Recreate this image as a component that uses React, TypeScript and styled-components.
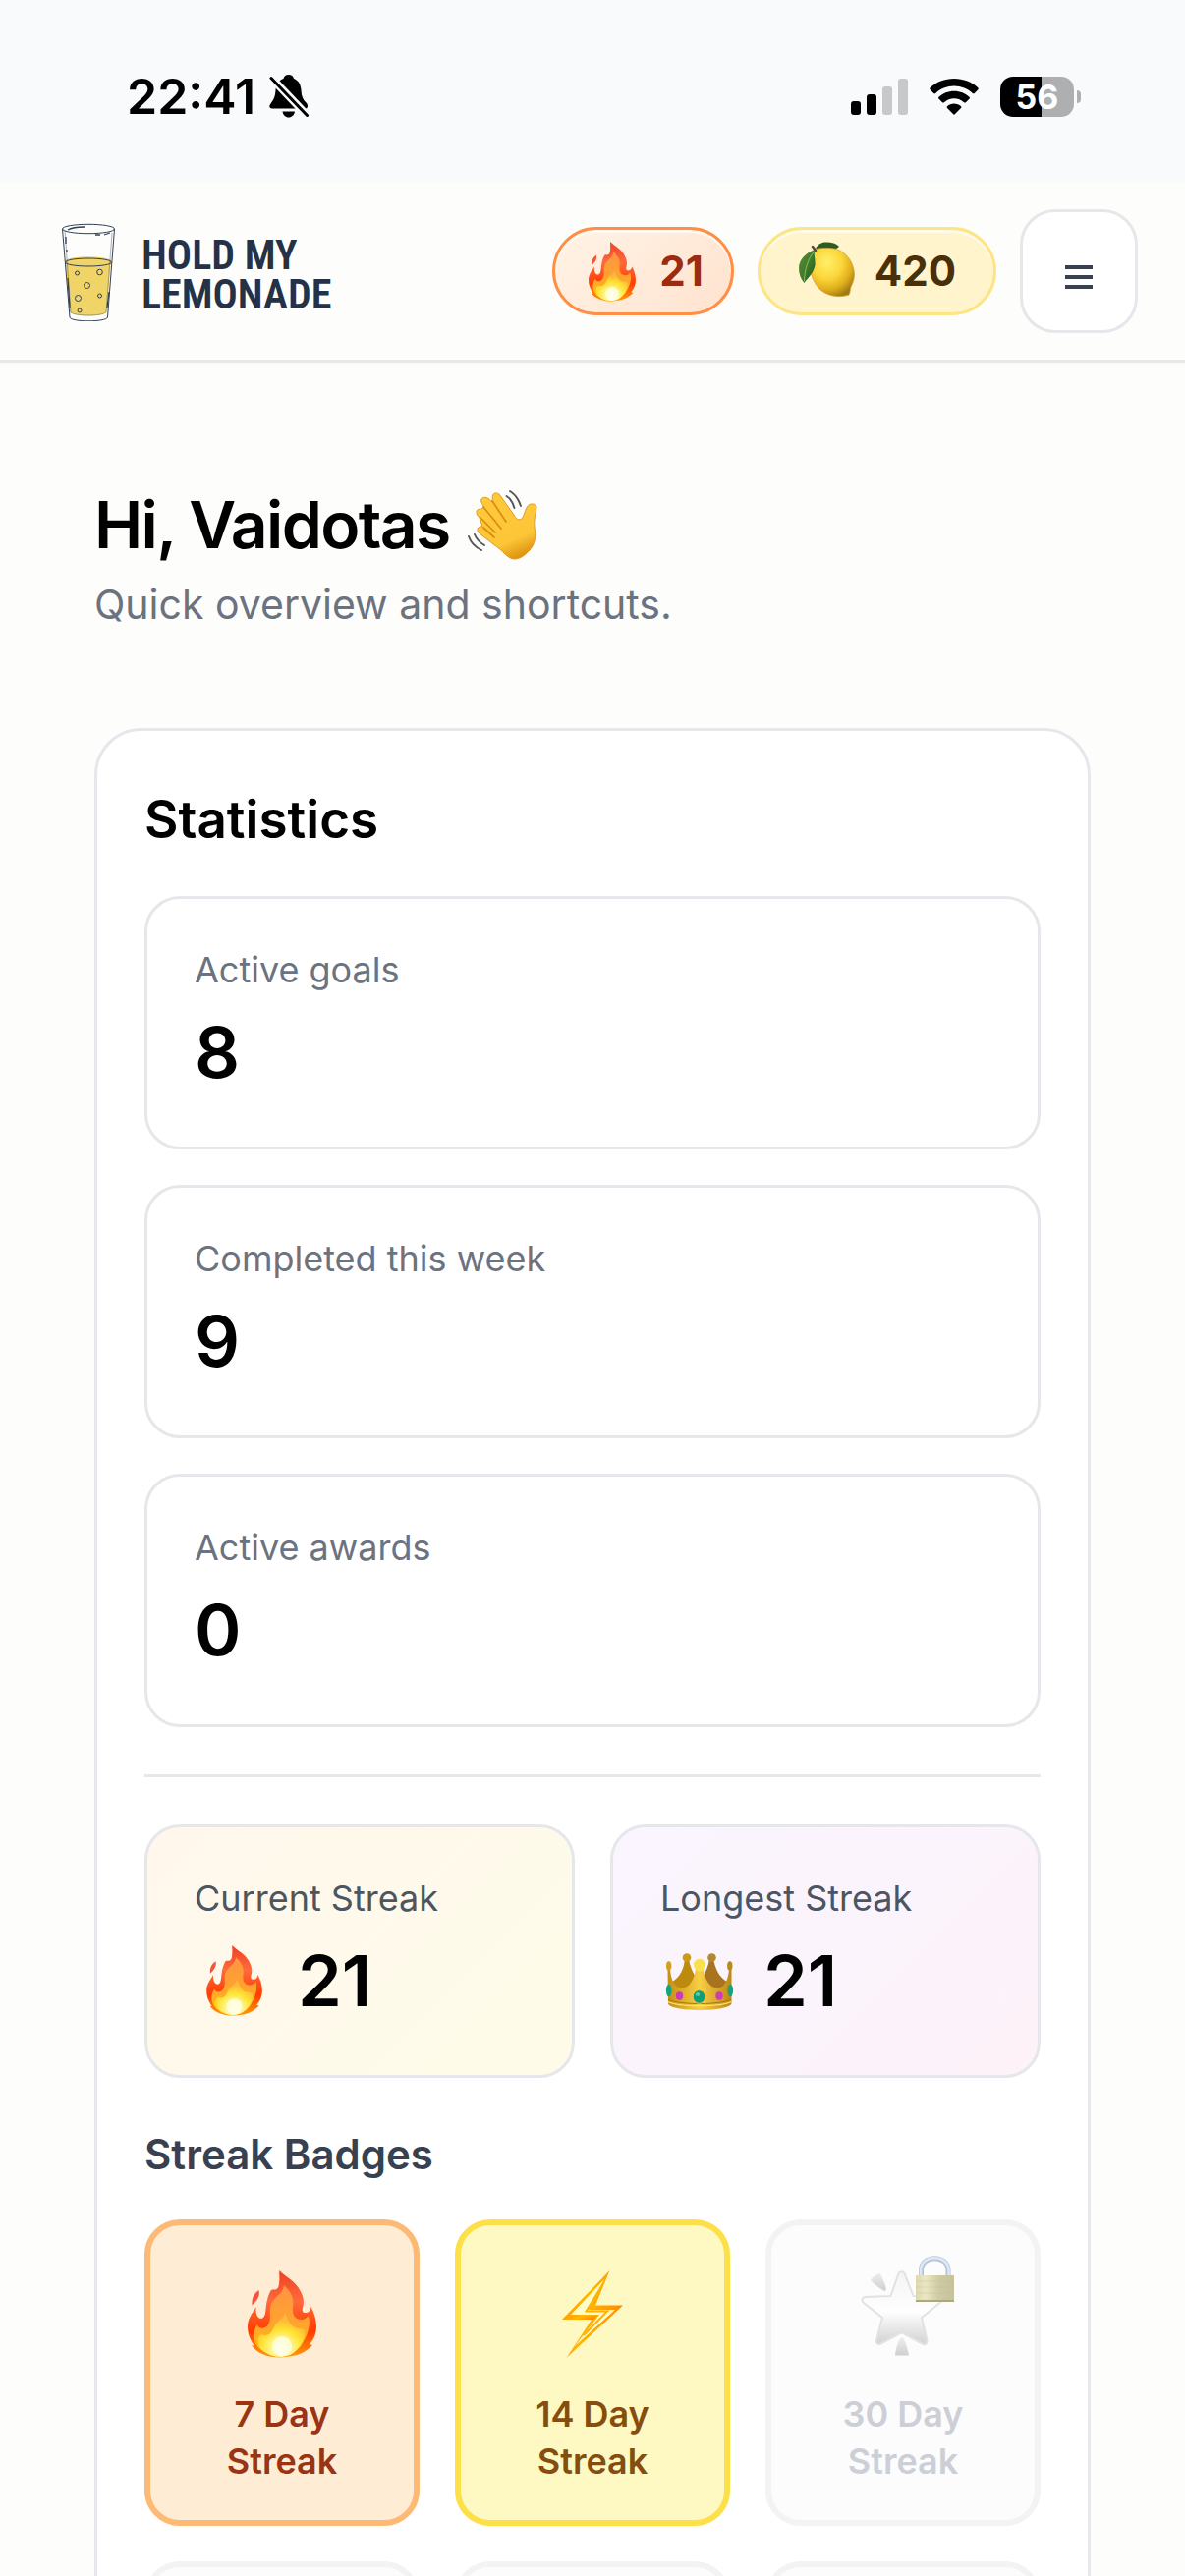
import React from "react";
import styled, { createGlobalStyle } from "styled-components";

const line = "#e5e7eb";

const GlobalStyle = createGlobalStyle`
  *, *::before, *::after { box-sizing: border-box; }
  body {
    margin: 0;
    background: #fdfdfb;
    color: #000;
    font-family: Inter, "Liberation Sans", sans-serif;
  }
  h1, h2, h3, p, dl, dd, ul { margin: 0; padding: 0; }
  svg { display: block; flex: none; }
`;

const Screen = styled.div`
  display: flex;
  flex-direction: column;
  height: 100vh;
  overflow: hidden;
`;

/* ---------- status bar ---------- */

const StatusBar = styled.div`
  flex: none;
  display: flex;
  align-items: center;
  justify-content: space-between;
  height: 186px;
  padding: 10px 106px 0 129px;
  background: #f9fafc;
`;

const StatusGroup = styled.div<{ $gap: number }>`
  display: flex;
  align-items: center;
  gap: ${(p) => p.$gap}px;
`;

const Clock = styled.time`
  font-size: 50px;
  line-height: 60px;
  font-weight: 600;
`;

const Battery = styled.div`
  display: flex;
  align-items: center;
  gap: 3px;
`;

const BatteryCell = styled.span<{ $level: number }>`
  width: 75px;
  border-radius: 13px;
  background: linear-gradient(
    to right,
    #000 ${(p) => p.$level}%,
    #aeafb1 ${(p) => p.$level}%
  );
  color: #fff;
  font-size: 34px;
  line-height: 41px;
  font-weight: 700;
  text-align: center;
`;

const BatteryTip = styled.span`
  width: 4px;
  height: 13px;
  border-radius: 0 4px 4px 0;
  background: #aeafb1;
`;

/* ---------- header ---------- */

const Header = styled.header`
  flex: none;
  display: flex;
  align-items: center;
  justify-content: space-between;
  padding: 27px 48px 27px 60px;
  border-bottom: 3px solid ${line};
`;

const Brand = styled.a`
  display: flex;
  align-items: center;
  gap: 24px;
  color: #243147;
  text-decoration: none;
`;

const BrandName = styled.span`
  padding-top: 8px;
  font-family: "Roboto Condensed", Lato, sans-serif;
  font-size: 42px;
  line-height: 40px;
  font-weight: 600;
`;

const HeaderActions = styled.div`
  display: flex;
  align-items: center;
  gap: 24px;
`;

const Pill = styled.span<{ $tone: "fire" | "lemon" }>`
  display: flex;
  align-items: center;
  gap: 18px;
  height: 90px;
  padding: 0 ${(p) => (p.$tone === "fire" ? 28 : 38)}px;
  border: 3px solid ${(p) => (p.$tone === "fire" ? "#ff8f47" : "#fde585")};
  border-radius: 45px;
  background: ${(p) =>
    p.$tone === "fire"
      ? "linear-gradient(135deg, #fff3e6, #ffe3cf)"
      : "#fff4cc"};
  box-shadow: inset 0 3px 0 rgba(255, 255, 255, 0.6);
  color: ${(p) => (p.$tone === "fire" ? "#9b2c12" : "#4a3009")};
  font-size: 42px;
  line-height: 60px;
  font-weight: 700;
`;

const MenuButton = styled.button`
  display: flex;
  align-items: center;
  justify-content: center;
  width: 120px;
  height: 126px;
  padding: 0;
  border: 3px solid ${line};
  border-radius: 36px;
  background: #fff;
  color: #374151;
`;

/* ---------- page ---------- */

const Main = styled.main`
  flex: 1;
  min-height: 0;
  padding: 120px 96px 0;
`;

const Intro = styled.div`
  display: flex;
  flex-direction: column;
  gap: 6px;
  margin-bottom: 96px;
`;

const Greeting = styled.h1`
  display: flex;
  align-items: center;
  gap: 18px;
  font-size: 66px;
  line-height: 90px;
  font-weight: 600;
  letter-spacing: -0.025em;
`;

const Lead = styled.p`
  color: #6b7280;
  font-size: 41px;
  line-height: 60px;
`;

const Card = styled.section`
  padding: 48px;
  border: 3px solid ${line};
  border-radius: 48px;
  background: #fff;
`;

const CardTitle = styled.h2`
  margin-bottom: 36px;
  font-size: 53px;
  line-height: 84px;
  font-weight: 600;
`;

const Grid = styled.dl<{ $columns: number }>`
  display: grid;
  grid-template-columns: repeat(${(p) => p.$columns}, minmax(0, 1fr));
  gap: 36px;
`;

const Tile = styled.div<{ $fill?: string }>`
  display: flex;
  flex-direction: column;
  gap: 12px;
  padding: 48px;
  border: 3px solid ${line};
  border-radius: 36px;
  background: ${(p) => p.$fill ?? "#fff"};
`;

const TileLabel = styled.dt<{ $strong?: boolean }>`
  color: ${(p) => (p.$strong ? "#4b5563" : "#6b7280")};
  font-size: 36px;
  line-height: 48px;
`;

const TileValue = styled.dd`
  display: flex;
  align-items: center;
  gap: 15px;
  font-size: 72px;
  line-height: 96px;
  font-weight: 600;
`;

const Divider = styled.hr`
  height: 3px;
  margin: 48px 0;
  border: 0;
  background: ${line};
`;

const BadgesTitle = styled.h3`
  margin: 48px 0 36px;
  color: #374151;
  font-size: 42px;
  line-height: 60px;
  font-weight: 600;
`;

const BadgeGrid = styled.ul`
  display: grid;
  grid-template-columns: repeat(3, minmax(0, 1fr));
  gap: 36px;
  list-style: none;
`;

const tones = {
  orange: { border: "#fdba74", fill: "#ffecd5", text: "#9a3412" },
  yellow: { border: "#fde047", fill: "#fef8c3", text: "#854d0e" },
  locked: { border: "#f2f3f5", fill: "#fcfcfd", text: "#cdcfd7" },
};

const Badge = styled.li<{ $tone: keyof typeof tones }>`
  display: flex;
  flex-direction: column;
  align-items: center;
  gap: 24px;
  min-height: 312px;
  padding: 36px;
  border: 6px solid ${(p) => tones[p.$tone].border};
  border-radius: 36px;
  background: ${(p) => tones[p.$tone].fill};
  color: ${(p) => tones[p.$tone].text};
`;

const BadgeIcon = styled.span`
  position: relative;
  display: flex;
  align-items: center;
  justify-content: center;
  width: 108px;
  height: 108px;
`;

const LockBadge = styled.span`
  position: absolute;
  top: -5px;
  right: 2px;
`;

const BadgeName = styled.span`
  max-width: 160px;
  font-size: 36px;
  line-height: 48px;
  font-weight: 600;
  text-align: center;
`;

/* ---------- drawings ---------- */

type FlameProps = { id: string; size: number; before?: number; after?: number };

/* size is the flame's width; before and after are blank room at its sides */
function Flame({ id, size, before = 0, after = 0 }: FlameProps) {
  const unit = 70 / size;
  const height = Math.round(89 / unit);
  return (
    <svg
      width={size + before + after}
      height={height}
      viewBox={`${-before * unit} 0 ${70 + (before + after) * unit} 89`}
      role="img"
      aria-label="Fire"
    >
      <defs>
        <linearGradient id={`${id}a`} x1="0" y1="0" x2="0" y2="1">
          <stop offset="0" stopColor="#ef4023" />
          <stop offset="0.35" stopColor="#ff6a3c" />
          <stop offset="0.7" stopColor="#ff3d00" />
          <stop offset="1" stopColor="#ff9d0a" />
        </linearGradient>
        <linearGradient id={`${id}b`} x1="0" y1="0" x2="0" y2="1">
          <stop offset="0" stopColor="#ff9443" />
          <stop offset="0.6" stopColor="#ffa62b" />
          <stop offset="1" stopColor="#ffc60a" />
        </linearGradient>
        <radialGradient id={`${id}c`} cx="0.5" cy="0.82" r="0.65">
          <stop offset="0" stopColor="#fffff0" />
          <stop offset="0.35" stopColor="#fff68a" />
          <stop offset="0.7" stopColor="#ffe02e" />
          <stop offset="1" stopColor="#ffb93c" />
        </radialGradient>
      </defs>
      <path
        fill={`url(#${id}a)`}
        d="M32.300 0C39 7 46 9 52 18C57 26 58 32 56 38C55 42 57 43 59 43C62 43 64 41 64.500 37C68 44 70 50 70 57C70 63 68 70 63 75L66 76C60 83 50 88 33 88.500C20 88.500 9 84 4 76L7 77C2 70 0 64 0 57C0 49 4 45 8.500 37C8 44 10 49 14 49C19 48 18 40 19.500 32C21 26 23 20 25 19.500C28 20 31 19 31.500 16C33 10 32 5 32.300 0Z"
      />
      <path fill="#f4553a" d="M11.500 20C12.500 25 11.500 29 4.500 35.500C4 28 6 24 11.500 20Z" />
      <path
        fill={`url(#${id}b)`}
        d="M37 15C43 21 48 27 46 38C45 46 49 50 55 50C58 50 60 48 62 46C65 57 60 68 54 77C47 84 40 87 33 87C24 87 15 84 9 76C5 69 6 60 10 55C11 60 18 60 21 55C25 48 21 42 24 34C28 26 36 24 37 15Z"
      />
      <path
        fill={`url(#${id}c)`}
        d="M38 43C41 49 42 54 48 58C52 60 55 58 58 61C59 69 55 76 50 81C45 86 39 88 33 88C25 88 17 84 12 78C9 70 12 63 17 66C24 67 25 60 29 54C32 50 37 49 38 43Z"
      />
      <ellipse cx="35" cy="77" rx="10" ry="10" fill="#ffffec" opacity="0.75" />
    </svg>
  );
}

function Lemon() {
  return (
    <svg width="60" height="60" viewBox="-1 0 60 60" role="img" aria-label="Lemon">
      <defs>
        <radialGradient id="lemonSkin" cx="0.38" cy="0.3" r="0.75">
          <stop offset="0" stopColor="#fff06a" />
          <stop offset="0.45" stopColor="#fbd63a" />
          <stop offset="0.75" stopColor="#dfae1c" />
          <stop offset="1" stopColor="#a07a12" />
        </radialGradient>
        <linearGradient id="lemonLeaf" x1="0" y1="0" x2="1" y2="1">
          <stop offset="0" stopColor="#5c8f35" />
          <stop offset="0.55" stopColor="#3d7a2a" />
          <stop offset="1" stopColor="#1f4d19" />
        </linearGradient>
      </defs>
      <path fill="#2c5c1e" d="M17 7C20 1 25 0 30 0.500C35 1 38 2 41 5C38 8 33 8.500 28 8.500C24 9 20 9 17 7Z" />
      <path
        fill="url(#lemonSkin)"
        stroke="#d9a441"
        strokeWidth="0.800"
        d="M16 8C20 6.500 30 5.500 38 7.500C47 10 56 20 56.500 33C56.700 40 53 45 52.500 48C52 51 52 54 50 54.500C47 55 43 56 38 55.500C30 55 21 50 17 43C12 35 11 27 13 19Z"
      />
      <path fill="url(#lemonLeaf)" d="M16 8C6 12 0 19 0 27C0 33 2 38 5.500 42C9 37 15 32 16.500 24C17 18 15 13 16 8Z" />
      <path fill="none" stroke="#8fb868" strokeWidth="1" d="M15.500 10C9 18 6 28 5.500 40" />
      <path fill="none" stroke="#5b4a3a" strokeWidth="2.500" strokeLinecap="round" d="M14 5L17 9" />
    </svg>
  );
}

function Crown() {
  return (
    <svg width="90" height="72" viewBox="-6 -8 90 72" role="img" aria-label="Crown">
      <defs>
        <linearGradient id="crownFront" x1="0" y1="0" x2="1" y2="0">
          <stop offset="0" stopColor="#c48e12" />
          <stop offset="0.5" stopColor="#f8cf45" />
          <stop offset="1" stopColor="#bd8714" />
        </linearGradient>
      </defs>
      <path fill="#bb8a0e" d="M5 30C15 24 18 15 19 6H23C24 13 27 20 31 26V40H5Z" />
      <path fill="#a87420" d="M63 30C53 24 50 15 48 6H44C43 13 40 20 36 26V40H63Z" />
      <circle cx="21" cy="4.500" r="4.300" fill="#cb9a17" />
      <circle cx="46.500" cy="4.500" r="4.300" fill="#b08a2c" />
      <path
        fill="url(#crownFront)"
        d="M1.500 17H4C5 27 9 36 16 35.500C26 35 29 23 30.500 14H37C39 23 42 35 52 35.500C59 36 63 27 64 17H66.500V51C66 55 52 58 34 58C16 58 2 55 2 51Z"
      />
      <ellipse cx="34" cy="12" rx="6" ry="6.300" fill="#fae04d" />
      <ellipse cx="2.700" cy="13" rx="2.700" ry="4.800" fill="#d0a01e" />
      <ellipse cx="64.800" cy="13" rx="2.700" ry="4.800" fill="#b58a20" />
      <path fill="none" stroke="#a8760c" strokeWidth="1" d="M2 47C12 53 56 53 66 47" />
      <path fill="none" stroke="#ffe46a" strokeWidth="1.200" d="M2 49.500C12 55 56 55 66 49.500" />
      <ellipse cx="33.500" cy="44.500" rx="6.300" ry="6.800" fill="#0e9f76" stroke="#e9c64b" strokeWidth="1" />
      <ellipse cx="32" cy="42" rx="2.200" ry="2" fill="#4fd0aa" />
      <ellipse cx="13.500" cy="43.500" rx="3.700" ry="4.300" fill="#cf39b4" />
      <ellipse cx="54" cy="43.500" rx="3.700" ry="4.300" fill="#cf39b4" />
      <ellipse cx="2.700" cy="38" rx="2.800" ry="6.300" fill="#12a57c" />
      <ellipse cx="65.300" cy="38" rx="2.800" ry="6.300" fill="#12a57c" />
    </svg>
  );
}

function WavingHand() {
  return (
    <svg width="72" height="72" viewBox="0 -1 72 72" role="img" aria-label="Waving hand">
      <defs>
        <linearGradient id="handSkin" x1="0.200" y1="0" x2="0.600" y2="1">
          <stop offset="0" stopColor="#ffc93a" />
          <stop offset="0.75" stopColor="#fdc638" />
          <stop offset="1" stopColor="#e09512" />
        </linearGradient>
      </defs>
      <path
        fill="url(#handSkin)"
        stroke="#e39a1c"
        strokeWidth="1"
        d="M25.500 8C24 4 28 1.500 32 4L47 25C49 29 52 31 55 29C58 26 58 19 61.500 15.500C64.500 12.500 70.500 14 70 18C69 25 67 30 68 38C69.500 47 69 55 62 62C58 66 54 70 47 70C42 69.500 38 65 34 61L12 44C8 41 10 36 15 37L12 28C8 25 7.500 18 13 19.500L17 17C12 12 13 6 19 7.500C22 8.500 23 10 24.500 12Z"
      />
      <path
        fill="none"
        stroke="#d98b14"
        strokeWidth="1.700"
        strokeLinecap="round"
        d="M25 11L39 32M16 17L34 39M13 28L28 43M16 38L27 48"
      />
      <path
        fill="none"
        stroke="#555"
        strokeWidth="1.900"
        strokeLinecap="round"
        d="M43 1C48 4 52 10 54 16M39.500 6C43 8 46 13 47.500 18M1 47C3 53 8 58 14 61M7 45C9 50 12 53 17 56"
      />
    </svg>
  );
}

function Bolt() {
  return (
    <svg width="64" height="91" viewBox="-1 -1 64 91" role="img" aria-label="Lightning">
      <defs>
        <linearGradient id="boltEdge" x1="0" y1="0" x2="1" y2="0.300">
          <stop offset="0" stopColor="#ff9a05" />
          <stop offset="0.5" stopColor="#ffb800" />
          <stop offset="1" stopColor="#ff8a00" />
        </linearGradient>
      </defs>
      <path fill="url(#boltEdge)" d="M48.500 0L34 35.500H62L4.500 89L30 50H0Z" />
      <path fill="#fffcc8" d="M43 9L26 40H54L13 77L38 45H9Z" />
      <path fill="none" stroke="#ffb300" strokeWidth="2" d="M41 15L24.500 41.500H46L22 66" />
      <path fill="url(#boltEdge)" d="M12 46.500H35L37 44.500L32 50H6Z" />
    </svg>
  );
}

function PaleStar() {
  return (
    <svg width="108" height="108" viewBox="0 0 108 108" role="img" aria-label="Star">
      <defs>
        <linearGradient id="paleStar" x1="0" y1="0" x2="0" y2="1">
          <stop offset="0" stopColor="#f4f4f4" />
          <stop offset="0.55" stopColor="#fefefe" />
          <stop offset="1" stopColor="#d2d2d2" />
        </linearGradient>
        <linearGradient id="paleTrail" x1="0" y1="0" x2="0" y2="1">
          <stop offset="0" stopColor="#ededed" />
          <stop offset="1" stopColor="#cfcfcf" />
        </linearGradient>
      </defs>
      <path
        fill="url(#paleStar)"
        stroke="#e2e2e2"
        strokeWidth="2"
        strokeLinejoin="round"
        d="M49.500 13C51 10.500 54 10.500 55.500 13L64.500 36L90 37C94 37.500 94 41 91.500 43L73 58L78.500 81C79 85 76 86 73.500 84.500L52.700 73L31.500 84.500C28.500 86 26 84 27 81L33 58L14 43C11.500 41 12 37.500 15.500 37L41.500 36Z"
      />
      <path fill="url(#paleTrail)" d="M30.500 13C27 14 23 17 21 20C26 25 30 28 35 31C37 31 37 29 36.500 27C35 22 33 17 30.500 13Z" />
      <path fill="url(#paleTrail)" d="M50.500 80C51.500 78 54 78 55 80C57 85 59 90 60 96.500H46C46.500 90 48 85 50.500 80Z" />
    </svg>
  );
}

function Padlock() {
  return (
    <svg width="39" height="47" viewBox="0 0 39 47" role="img" aria-label="Locked">
      <defs>
        <linearGradient id="lockBody" x1="0" y1="0" x2="1" y2="0">
          <stop offset="0" stopColor="#ddd9ae" />
          <stop offset="0.25" stopColor="#ebe7c4" />
          <stop offset="0.6" stopColor="#cfcba4" />
          <stop offset="1" stopColor="#c6c29b" />
        </linearGradient>
      </defs>
      <path fill="none" stroke="#b9c4d2" strokeWidth="5" d="M5.500 22V15C5.500 -1.500 33 -1.500 33 15V22" />
      <path fill="none" stroke="#dce8f8" strokeWidth="2.500" d="M5 22V15C5 -2 33.500 -2 33.500 15V22" />
      <rect x="0" y="20" width="39" height="27" rx="1" fill="url(#lockBody)" />
      <path stroke="#c3bf98" strokeWidth="1" opacity="0.400" d="M0 26H39M0 32H39M0 38H39" />
      <path stroke="#aaa784" strokeWidth="2" d="M0 46H39" />
    </svg>
  );
}

function Glass() {
  return (
    <svg width="60" height="102" viewBox="0 0 60 102" fill="none" stroke="#344054" strokeWidth="1" aria-hidden="true">
      <path fill="#f0d467" stroke="none" d="M6.500 40C14 35 45 35 53 40L48.500 92C46 98 14 98 11 92Z" />
      <ellipse cx="30" cy="8" rx="26.500" ry="4.700" />
      <path d="M3.500 8L11 98C12 103 48 103 49.500 98L56.500 8" />
      <path d="M6 9L12 93C17 97 43 97 48 93L54 12" opacity="0.400" />
      <ellipse cx="30" cy="42" rx="23.500" ry="4" />
      <path d="M9 9C14 6 20 6 26 6M37 14H42M46 14L52 12M7 16V23M8 29V32M9 58L11 88M49 88L51 72" strokeWidth="1.300" />
      <g>
        <circle cx="18.500" cy="53" r="2" />
        <circle cx="41.500" cy="52" r="2.800" />
        <circle cx="28.500" cy="65.500" r="3" />
        <circle cx="19.500" cy="78.500" r="3" />
        <circle cx="41.500" cy="76" r="2" />
        <circle cx="21" cy="91" r="2" />
      </g>
    </svg>
  );
}

function BellOff() {
  return (
    <svg width="40" height="44" viewBox="0 0 40 44" role="img" aria-label="Silent">
      <path d="M19.600 0C22.500 0 24.500 1.500 25 4C30 6 32 10 32.500 16C33 22 34 25 38 29C40 32 39 34.500 36 34.500H3C0 34.500 -0.500 32 1.500 29.500C5 25 6 22 6.500 16C7 10 9 6 14.500 4C15 1.500 17 0 19.600 0Z" />
      <path d="M13.500 37.500H26C25.500 41 23 43.500 19.700 43.500C16.500 43.500 14 41 13.500 37.500Z" />
      <path d="M0 1L40 43" stroke="#f9fafc" strokeWidth="8" />
      <path d="M2 3.500L38.500 41.500" stroke="#000" strokeWidth="3" strokeLinecap="round" />
    </svg>
  );
}

function Signal() {
  return (
    <svg width="58" height="38" viewBox="0 0 58 38" role="img" aria-label="Signal, 2 of 4 bars">
      <rect x="0" y="24" width="10" height="14" rx="3" />
      <rect x="16" y="17" width="10" height="21" rx="3" />
      <rect x="32" y="9" width="10" height="29" rx="3" fill="#c7c8ca" />
      <rect x="48" y="1" width="10" height="37" rx="3" fill="#c7c8ca" />
    </svg>
  );
}

function Wifi() {
  return (
    <svg width="50" height="38" viewBox="0 0 50 38" role="img" aria-label="Wi-Fi">
      <path d="M25 1C15.500 1 6.500 4.500 0.700 10.300C0.100 11 0.100 11.700 0.600 12.300L4.300 16C4.800 16.500 5.600 16.500 6.200 16C11 11.300 17.800 8.500 25 8.500C32.200 8.500 39 11.300 43.800 16C44.400 16.500 45.200 16.500 45.700 16L49.400 12.300C49.900 11.700 49.900 11 49.300 10.300C43.500 4.500 34.500 1 25 1Z" />
      <path d="M25 13.700C19 13.700 13.500 16 9.500 19.700C8.900 20.300 8.900 21 9.400 21.500L13.100 25.200C13.600 25.700 14.400 25.700 15 25.200C17.700 22.700 21.200 21.200 25 21.200C28.800 21.200 32.300 22.700 35 25.200C35.600 25.700 36.400 25.700 36.900 25.200L40.600 21.500C41.100 21 41.100 20.300 40.500 19.700C36.500 16 31 13.700 25 13.700Z" />
      <path d="M25 26.500C22.300 26.500 19.900 27.500 18 29.200C17.500 29.700 17.500 30.400 18 31L24.200 37.300C24.700 37.800 25.300 37.800 25.800 37.300L32 31C32.500 30.400 32.500 29.700 32 29.200C30.100 27.500 27.700 26.500 25 26.500Z" />
    </svg>
  );
}

function MenuIcon() {
  return (
    <svg width="28" height="36" viewBox="0 0 28 36" stroke="currentColor" strokeWidth="4" aria-hidden="true">
      <path d="M0 14H28M0 24H28M0 34H28" />
    </svg>
  );
}

/* ---------- data ---------- */

const stats = [
  { label: "Active goals", value: 8 },
  { label: "Completed this week", value: 9 },
  { label: "Active awards", value: 0 },
];

const streaks = [
  {
    label: "Current Streak",
    value: 21,
    fill: "linear-gradient(135deg, #fff7ed, #fefce8)",
    icon: <Flame id="current" size={57} before={12} after={21} />,
  },
  {
    label: "Longest Streak",
    value: 21,
    fill: "linear-gradient(135deg, #faf5ff, #fdf2f8)",
    icon: <Crown />,
  },
];

export default function App() {
  return (
    <Screen>
      <GlobalStyle />
      <StatusBar>
        <StatusGroup $gap={14}>
          <Clock>22:41</Clock>
          <BellOff />
        </StatusGroup>
        <StatusGroup $gap={22}>
          <Signal />
          <Wifi />
          <Battery>
            <BatteryCell $level={56}>56</BatteryCell>
            <BatteryTip />
          </Battery>
        </StatusGroup>
      </StatusBar>

      <Header>
        <Brand href="#">
          <Glass />
          <BrandName>
            HOLD MY
            <br />
            LEMONADE
          </BrandName>
        </Brand>
        <HeaderActions>
          <Pill $tone="fire">
            <Flame id="pill" size={48} before={6} after={6} />
            21
          </Pill>
          <Pill $tone="lemon">
            <Lemon />
            420
          </Pill>
          <MenuButton type="button" aria-label="Open menu">
            <MenuIcon />
          </MenuButton>
        </HeaderActions>
      </Header>

      <Main>
        <Intro>
          <Greeting>
            Hi, Vaidotas
            <WavingHand />
          </Greeting>
          <Lead>Quick overview and shortcuts.</Lead>
        </Intro>

        <Card>
          <CardTitle>Statistics</CardTitle>
          <Grid $columns={1}>
            {stats.map((s) => (
              <Tile key={s.label}>
                <TileLabel>{s.label}</TileLabel>
                <TileValue>{s.value}</TileValue>
              </Tile>
            ))}
          </Grid>
          <Divider />
          <Grid $columns={2}>
            {streaks.map((s) => (
              <Tile key={s.label} $fill={s.fill}>
                <TileLabel $strong>{s.label}</TileLabel>
                <TileValue>
                  {s.icon}
                  {s.value}
                </TileValue>
              </Tile>
            ))}
          </Grid>

          <BadgesTitle>Streak Badges</BadgesTitle>
          <BadgeGrid>
            <Badge $tone="orange">
              <BadgeIcon>
                <Flame id="badge" size={70} />
              </BadgeIcon>
              <BadgeName>7 Day Streak</BadgeName>
            </Badge>
            <Badge $tone="yellow">
              <BadgeIcon>
                <Bolt />
              </BadgeIcon>
              <BadgeName>14 Day Streak</BadgeName>
            </Badge>
            <Badge $tone="locked">
              <BadgeIcon>
                <PaleStar />
                <LockBadge>
                  <Padlock />
                </LockBadge>
              </BadgeIcon>
              <BadgeName>30 Day Streak</BadgeName>
            </Badge>
            <Badge $tone="locked" />
            <Badge $tone="locked" />
            <Badge $tone="locked" />
          </BadgeGrid>
        </Card>
      </Main>
    </Screen>
  );
}
